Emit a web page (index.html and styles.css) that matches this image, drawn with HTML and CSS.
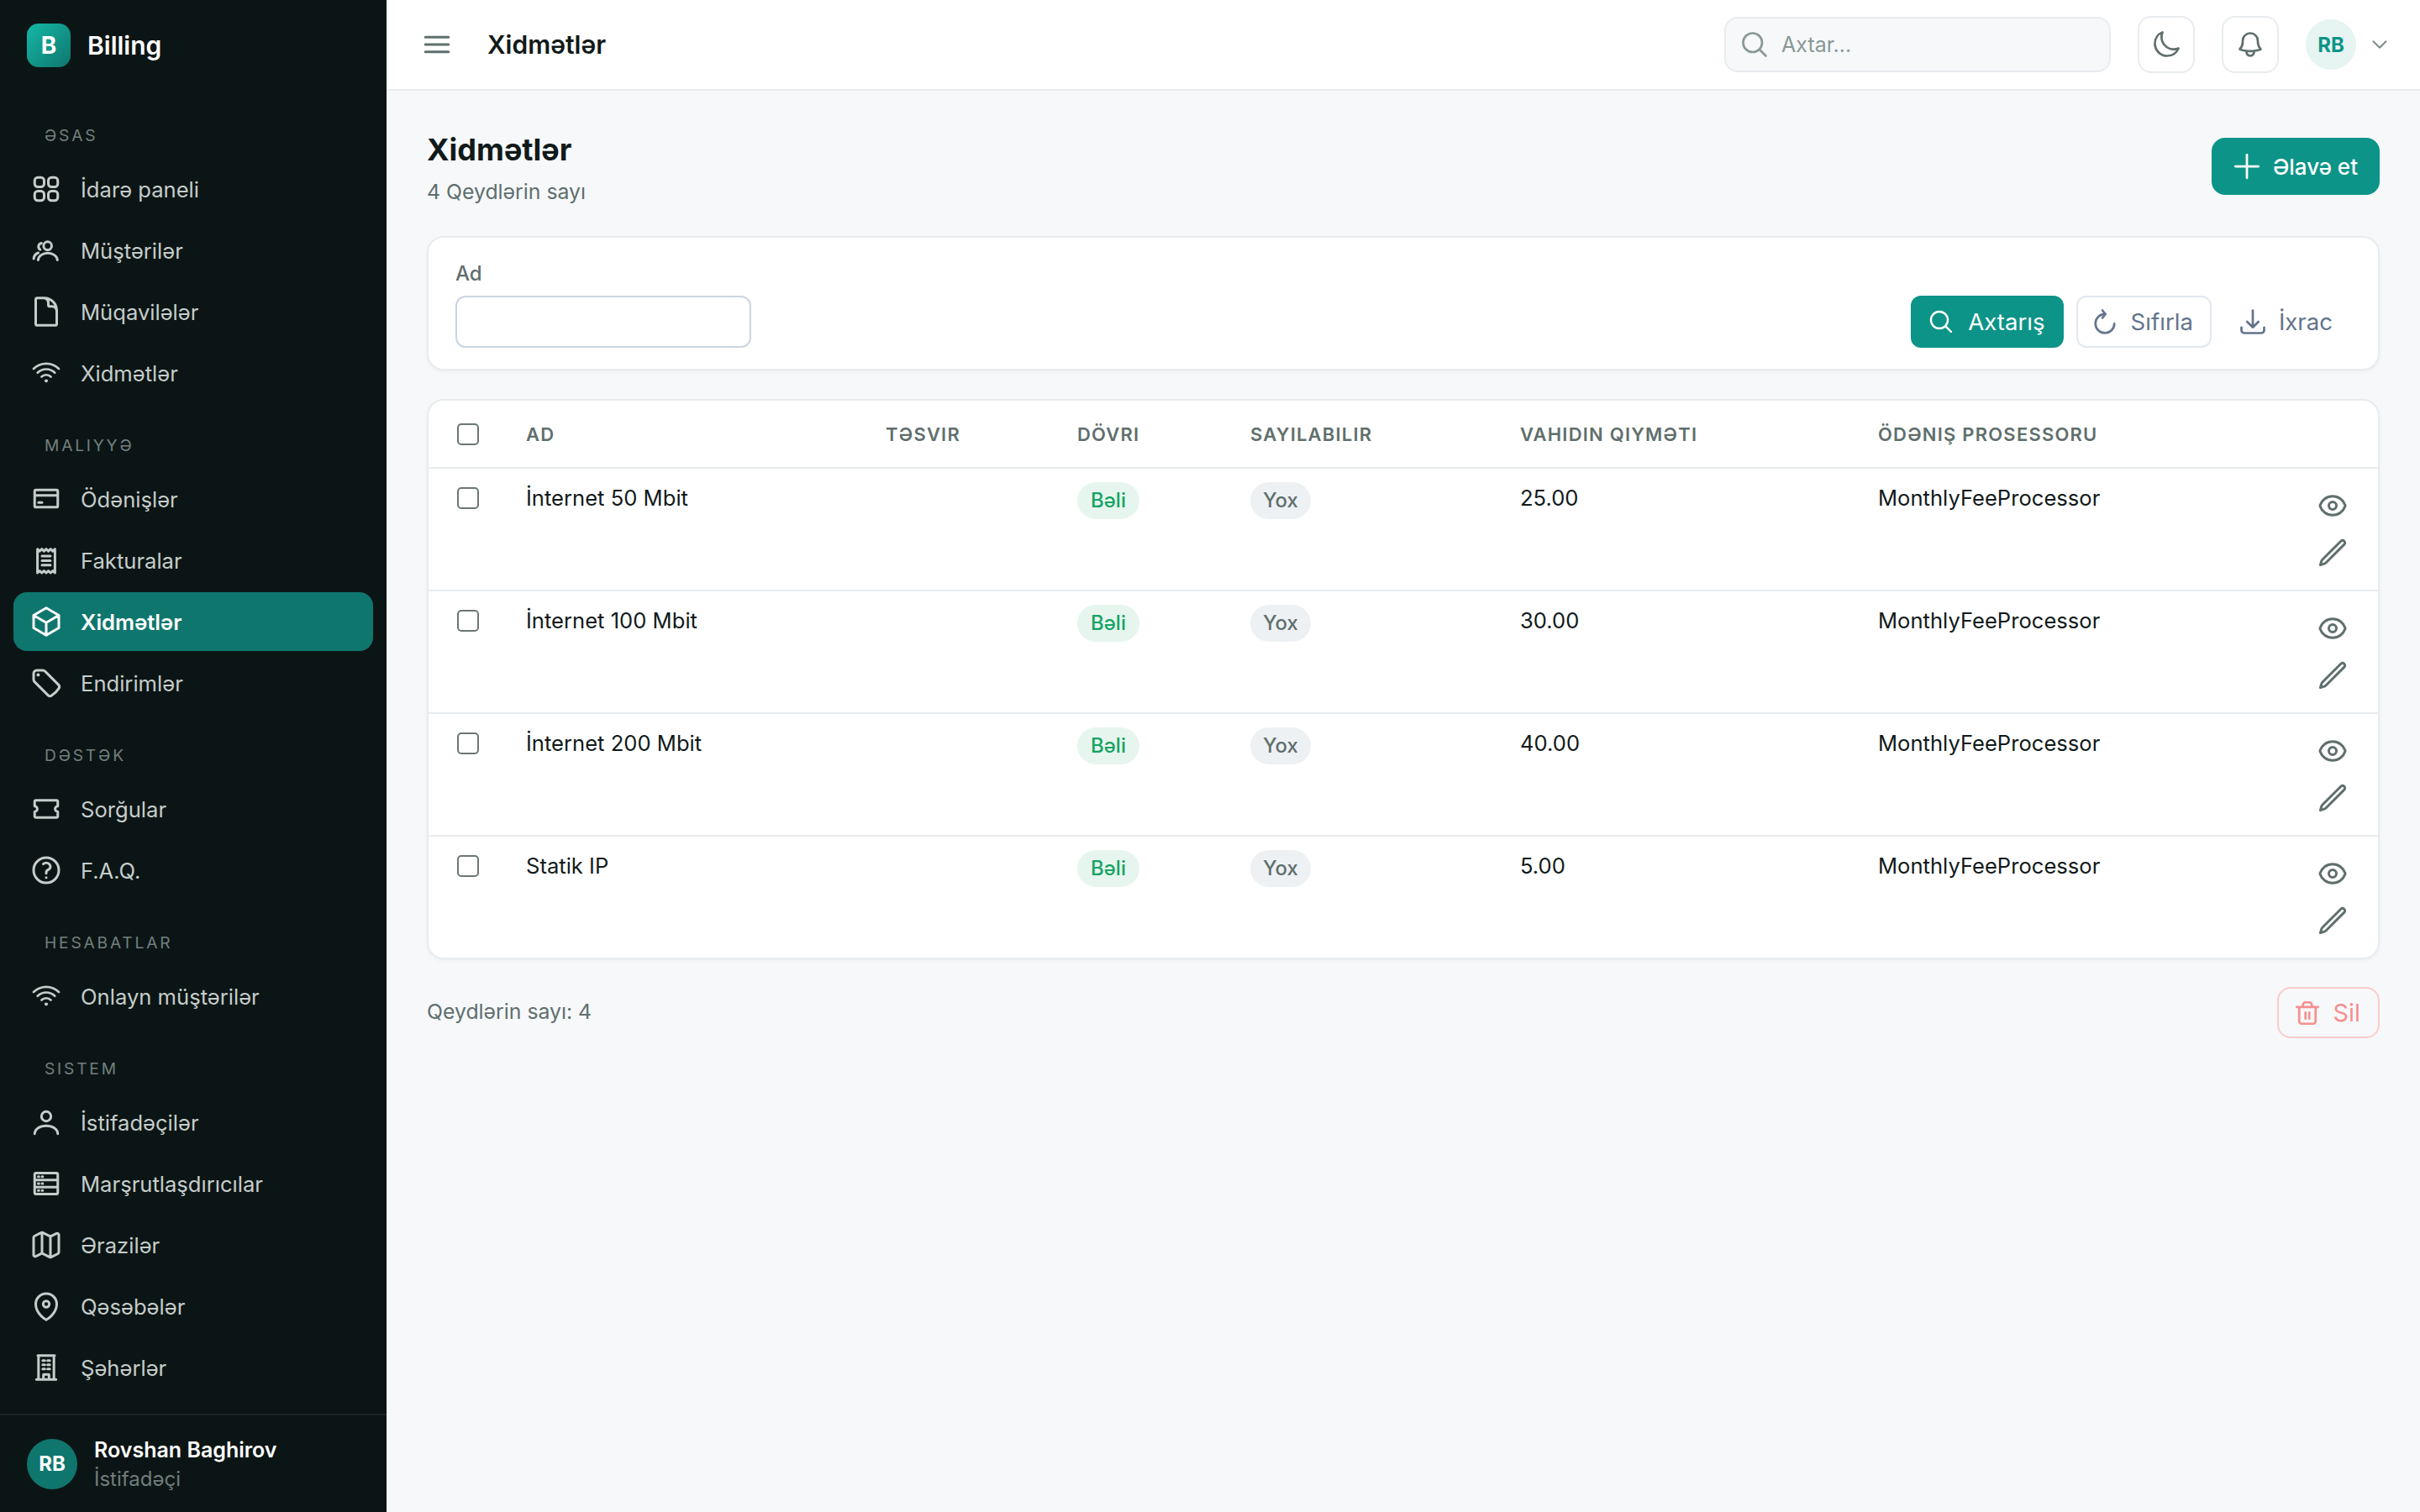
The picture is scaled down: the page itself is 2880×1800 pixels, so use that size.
FILE: index.html
```html
<!DOCTYPE html>
<html lang="az">
<head>
  <meta charset="UTF-8">
  <title>Xidmətlər - Billing</title>
  <link rel="stylesheet" href="styles.css">
</head>
<body>
  <svg class="sprite" xmlns="http://www.w3.org/2000/svg">
    <symbol id="i-grid" viewBox="0 0 24 24"><path d="M3.75 6A2.25 2.25 0 0 1 6 3.75h2.25A2.25 2.25 0 0 1 10.5 6v2.25a2.25 2.25 0 0 1-2.25 2.25H6a2.25 2.25 0 0 1-2.25-2.25V6ZM3.75 15.75A2.25 2.25 0 0 1 6 13.5h2.25a2.25 2.25 0 0 1 2.25 2.25V18a2.25 2.25 0 0 1-2.25 2.25H6A2.25 2.25 0 0 1 3.75 18v-2.25ZM13.5 6a2.25 2.25 0 0 1 2.25-2.25H18A2.25 2.25 0 0 1 20.25 6v2.25A2.25 2.25 0 0 1 18 10.5h-2.25a2.25 2.25 0 0 1-2.25-2.25V6ZM13.5 15.75a2.25 2.25 0 0 1 2.25-2.25H18a2.25 2.25 0 0 1 2.25 2.25V18A2.25 2.25 0 0 1 18 20.25h-2.25A2.25 2.25 0 0 1 13.5 18v-2.25Z"/></symbol>
    <symbol id="i-users" viewBox="0 0 24 24"><circle cx="13" cy="8.8" r="2.9"/><path d="M6.2 18.9c.3-2.9 3.2-4.9 6.9-4.9s6.6 2 6.9 4.9M8.6 6.9a2.5 2.5 0 0 0-.9 4.6M3.1 18c.1-1.900 1.200-3.500 3.200-4.200"/></symbol>
    <symbol id="i-doc" viewBox="0 0 24 24"><path d="M19.5 14.25v-2.625a3.375 3.375 0 0 0-3.375-3.375h-1.500A1.125 1.125 0 0 1 13.5 7.125v-1.500a3.375 3.375 0 0 0-3.375-3.375H8.250m2.250 0H5.625c-.621 0-1.125.504-1.125 1.125v17.250c0 .621.504 1.125 1.125 1.125h12.750c.621 0 1.125-.504 1.125-1.125V11.250a9 9 0 0 0-9-9Z"/></symbol>
    <symbol id="i-wifi" viewBox="-1.4 -1.4 26.8 26.8"><path d="M8.288 15.038a5.25 5.25 0 0 1 7.424 0M5.106 11.856c3.807-3.808 9.980-3.808 13.788 0M1.924 8.674c5.565-5.565 14.587-5.565 20.152 0M12.530 18.220l-.530.530-.530-.530a.750.750 0 0 1 1.060 0Z"/></symbol>
    <symbol id="i-card" viewBox="0 0 24 24"><path d="M3.750 9.500h16.500M6.500 14.500h2.500M4.750 5.500h14.500a1 1 0 0 1 1 1v10.400a1 1 0 0 1-1 1H4.750a1 1 0 0 1-1-1V6.500a1 1 0 0 1 1-1Z"/></symbol>
    <symbol id="i-receipt" viewBox="0 0 24 24"><path d="M5.750 4l1.560 1.500 1.560-1.500 1.560 1.500 1.560-1.500 1.560 1.500 1.560-1.500 1.560 1.500 1.560-1.500v17l-1.560-1.500-1.560 1.500-1.560-1.500-1.560 1.500-1.560-1.500-1.560 1.500-1.560-1.500-1.560 1.500ZM9 9h6M9 12.250h6M9 15.500h6"/></symbol>
    <symbol id="i-cube" viewBox="0 0 24 24"><path d="m21 7.500-9-5.250L3 7.500m18 0-9 5.250m9-5.250v9l-9 5.250M3 7.500l9 5.250M3 7.500v9l9 5.250m0-9v9"/></symbol>
    <symbol id="i-tag" viewBox="0 0 24 24"><path d="M9.568 3H5.250A2.250 2.250 0 0 0 3 5.250v4.318c0 .597.237 1.170.659 1.591l9.581 9.581c.699.699 1.780.872 2.607.330a18.095 18.095 0 0 0 5.223-5.223c.542-.827.369-1.908-.330-2.607L11.160 3.660A2.250 2.250 0 0 0 9.568 3Z"/><path d="M6 6h.500v.500H6V6Z"/></symbol>
    <symbol id="i-ticket" viewBox="0 0 24 24"><path d="M4.750 5.900h14.500a1 1 0 0 1 1 1v3.200a1.900 1.900 0 0 0 0 3.800v3.200a1 1 0 0 1-1 1H4.750a1 1 0 0 1-1-1v-3.200a1.900 1.900 0 0 0 0-3.800V6.900a1 1 0 0 1 1-1Z"/></symbol>
    <symbol id="i-help" viewBox="0 0 24 24"><path d="M9.879 7.519c1.171-1.025 3.071-1.025 4.242 0 1.172 1.025 1.172 2.687 0 3.712-.203.179-.430.326-.670.442-.745.361-1.450.999-1.450 1.827v.750M21 12a9 9 0 1 1-18 0 9 9 0 0 1 18 0Zm-9 5.250h.008v.008H12v-.008Z"/></symbol>
    <symbol id="i-user" viewBox="0 0 24 24"><circle cx="12" cy="7.800" r="3.400"/><path d="M3.750 20.200c.2-3.500 3.800-5.700 8.250-5.700s8.050 2.200 8.250 5.700"/></symbol>
    <symbol id="i-server" viewBox="0 0 24 24"><path d="M4.750 4.500h14.500a1 1 0 0 1 1 1v13a1 1 0 0 1-1 1H4.750a1 1 0 0 1-1-1v-13a1 1 0 0 1 1-1ZM3.750 9.500h16.500M3.750 14.500h16.500M6.300 7h.500M9 7h.500M6.300 12h.500M9 12h.500M6.300 17h.500M9 17h.500"/></symbol>
    <symbol id="i-map" viewBox="0 0 24 24"><path d="M9 3.400V18.200m6-12.700v15.400m.503-.152 4.875-2.437c.381-.190.622-.580.622-1.006V4.820c0-.836-.880-1.380-1.628-1.006l-3.869 1.934c-.317.159-.690.159-1.006 0L9.503 3.252a1.125 1.125 0 0 0-1.006 0L3.622 5.689C3.240 5.880 3 6.270 3 6.695V19.180c0 .836.880 1.380 1.628 1.006l3.869-1.934c.317-.159.690-.159 1.006 0l4.994 2.497c.317.158.690.158 1.006 0Z"/></symbol>
    <symbol id="i-pin" viewBox="0 0 24 24"><circle cx="12" cy="10.500" r="2.200"/><path d="M19.500 10.500c0 7.142-7.500 11.250-7.500 11.250S4.500 17.642 4.500 10.500a7.500 7.500 0 1 1 15 0Z"/></symbol>
    <symbol id="i-building" viewBox="0 0 24 24"><path d="M5 20.500h14M6 3.500h12M6.500 3.500v17m11-17v17M9.500 7h1.500M9.500 10h1.500M9.500 13h1.500M13 7h1.500M13 10h1.500M13 13h1.500M10 20.500V17h4v3.500"/></symbol>
    <symbol id="i-bars" viewBox="0 0 24 24"><path d="M3.750 6.750h16.500M3.750 12h16.500m-16.500 5.250h16.500"/></symbol>
    <symbol id="i-search" viewBox="0 0 24 24"><path d="m21 21-5.197-5.197m0 0A7.500 7.500 0 1 0 5.196 5.196a7.500 7.500 0 0 0 10.607 10.607Z"/></symbol>
    <symbol id="i-moon" viewBox="0 0 24 24"><path d="M21.752 15.002A9.720 9.720 0 0 1 18 15.750c-5.385 0-9.750-4.365-9.750-9.750 0-1.330.266-2.597.748-3.752A9.753 9.753 0 0 0 3 11.250C3 16.635 7.365 21 12.750 21a9.753 9.753 0 0 0 9.002-5.998Z"/></symbol>
    <symbol id="i-bell" viewBox="0 0 24 24"><path d="M14.857 17.082a23.848 23.848 0 0 0 5.454-1.310A8.967 8.967 0 0 1 18 9.750V9A6 6 0 0 0 6 9v.750a8.967 8.967 0 0 1-2.312 6.022c1.733.640 3.560 1.085 5.455 1.310m5.714 0a24.255 24.255 0 0 1-5.714 0m5.714 0a3 3 0 1 1-5.714 0"/></symbol>
    <symbol id="i-chevron" viewBox="0 0 24 24"><path d="m19.500 8.250-7.500 7.500-7.500-7.500"/></symbol>
    <symbol id="i-plus" viewBox="0 0 24 24"><path d="M12 4.500v15m7.500-7.500h-15"/></symbol>
    <symbol id="i-reset" viewBox="0 0 24 24"><path d="M12.500 6A7.500 7.500 0 1 0 19.500 13.500M10 3l2.500 3L10 9"/></symbol>
    <symbol id="i-download" viewBox="0 0 24 24"><path d="M3 16.500v2.250A2.250 2.250 0 0 0 5.250 21h13.500A2.250 2.250 0 0 0 21 18.750V16.500M16.500 12 12 16.500m0 0L7.500 12m4.500 4.500V3"/></symbol>
    <symbol id="i-eye" viewBox="0 0 24 24"><path d="M2.036 12.322a1.012 1.012 0 0 1 0-.639C3.423 7.510 7.360 4.500 12 4.500c4.638 0 8.573 3.007 9.963 7.178.070.207.070.431 0 .639C20.577 16.490 16.640 19.500 12 19.500c-4.638 0-8.573-3.007-9.963-7.178Z"/><path d="M15 12a3 3 0 1 1-6 0 3 3 0 0 1 6 0Z"/></symbol>
    <symbol id="i-pencil" viewBox="0 0 24 24"><path d="m16.862 4.487 1.687-1.688a1.875 1.875 0 1 1 2.652 2.652L6.832 19.820a4.500 4.500 0 0 1-1.897 1.130l-2.685.800.800-2.685a4.500 4.500 0 0 1 1.130-1.897L16.863 4.487Z"/></symbol>
    <symbol id="i-trash" viewBox="0 0 24 24"><path d="M3.500 7.200h17M8.500 7V5.500a2 2 0 0 1 2-2h3a2 2 0 0 1 2 2V7M5.500 7.500v11a2 2 0 0 0 2 2h9a2 2 0 0 0 2-2v-11M10.500 11.500v5M13.500 11.500v5"/></symbol>
  </svg>

  <div class="app">
    <!-- sidebar -->
    <aside class="sidebar">
      <div class="brand">
        <div class="brand-logo">B</div>
        <div class="brand-name">Billing</div>
      </div>
      <nav class="nav">
        <div class="nav-label">ƏSAS</div>
        <a class="nav-item"><svg class="icon"><use href="#i-grid"/></svg>İdarə paneli</a>
        <a class="nav-item"><svg class="icon"><use href="#i-users"/></svg>Müştərilər</a>
        <a class="nav-item"><svg class="icon"><use href="#i-doc"/></svg>Müqavilələr</a>
        <a class="nav-item"><svg class="icon"><use href="#i-wifi"/></svg>Xidmətlər</a>

        <div class="nav-label">MALIYYƏ</div>
        <a class="nav-item"><svg class="icon"><use href="#i-card"/></svg>Ödənişlər</a>
        <a class="nav-item"><svg class="icon"><use href="#i-receipt"/></svg>Fakturalar</a>
        <a class="nav-item active"><svg class="icon"><use href="#i-cube"/></svg>Xidmətlər</a>
        <a class="nav-item"><svg class="icon"><use href="#i-tag"/></svg>Endirimlər</a>

        <div class="nav-label">DƏSTƏK</div>
        <a class="nav-item"><svg class="icon"><use href="#i-ticket"/></svg>Sorğular</a>
        <a class="nav-item"><svg class="icon"><use href="#i-help"/></svg>F.A.Q.</a>

        <div class="nav-label">HESABATLAR</div>
        <a class="nav-item"><svg class="icon"><use href="#i-wifi"/></svg>Onlayn müştərilər</a>

        <div class="nav-label">SISTEM</div>
        <a class="nav-item"><svg class="icon"><use href="#i-user"/></svg>İstifadəçilər</a>
        <a class="nav-item"><svg class="icon"><use href="#i-server"/></svg>Marşrutlaşdırıcılar</a>
        <a class="nav-item"><svg class="icon"><use href="#i-map"/></svg>Ərazilər</a>
        <a class="nav-item"><svg class="icon"><use href="#i-pin"/></svg>Qəsəbələr</a>
        <a class="nav-item"><svg class="icon"><use href="#i-building"/></svg>Şəhərlər</a>
      </nav>
      <div class="side-user">
        <div class="side-avatar">RB</div>
        <div>
          <div class="side-name">Rovshan Baghirov</div>
          <div class="side-role">İstifadəçi</div>
        </div>
      </div>
    </aside>

    <div class="content">
      <!-- top bar -->
      <header class="topbar">
        <svg class="icon topbar-menu"><use href="#i-bars"/></svg>
        <div class="topbar-title">Xidmətlər</div>
        <div class="topbar-search">
          <svg class="icon-md"><use href="#i-search"/></svg>
          <span>Axtar...</span>
        </div>
        <button class="square-btn"><svg class="icon-md"><use href="#i-moon"/></svg></button>
        <button class="square-btn"><svg class="icon-md"><use href="#i-bell"/></svg></button>
        <div class="top-avatar">RB</div>
        <svg class="top-chevron"><use href="#i-chevron"/></svg>
      </header>

      <main class="main">
        <div class="page-head">
          <div>
            <h1>Xidmətlər</h1>
            <p>4 Qeydlərin sayı</p>
          </div>
          <button class="btn-add"><svg class="icon-plus"><use href="#i-plus"/></svg>Əlavə et</button>
        </div>

        <section class="card filter">
          <div class="filter-field">
            <label>Ad</label>
            <input type="text" class="filter-input">
          </div>
          <div class="filter-actions">
            <button class="btn btn-primary"><svg class="icon-search"><use href="#i-search"/></svg>Axtarış</button>
            <button class="btn btn-outline"><svg class="icon-md"><use href="#i-reset"/></svg>Sıfırla</button>
            <button class="btn btn-ghost"><svg class="icon-md"><use href="#i-download"/></svg>İxrac</button>
          </div>
        </section>

        <section class="card table-card">
          <table class="table">
            <thead>
              <tr>
                <th class="col-check"><input type="checkbox" class="check"></th>
                <th class="col-name">AD</th>
                <th class="col-desc">TƏSVIR</th>
                <th class="col-period">DÖVRI</th>
                <th class="col-count">SAYILABILIR</th>
                <th class="col-price">VAHIDIN QIYMƏTI</th>
                <th class="col-proc">ÖDƏNIŞ PROSESSORU</th>
                <th></th>
              </tr>
            </thead>
            <tbody>
              <tr>
                <td class="cell-check"><input type="checkbox" class="check"></td>
                <td>İnternet 50 Mbit</td>
                <td></td>
                <td><span class="badge badge-green">Bəli</span></td>
                <td><span class="badge badge-gray">Yox</span></td>
                <td>25.00</td>
                <td>MonthlyFeeProcessor</td>
                <td class="cell-actions">
                  <button class="row-btn"><svg class="icon-md"><use href="#i-eye"/></svg></button>
                  <button class="row-btn"><svg class="icon-md"><use href="#i-pencil"/></svg></button>
                </td>
              </tr>
              <tr>
                <td class="cell-check"><input type="checkbox" class="check"></td>
                <td>İnternet 100 Mbit</td>
                <td></td>
                <td><span class="badge badge-green">Bəli</span></td>
                <td><span class="badge badge-gray">Yox</span></td>
                <td>30.00</td>
                <td>MonthlyFeeProcessor</td>
                <td class="cell-actions">
                  <button class="row-btn"><svg class="icon-md"><use href="#i-eye"/></svg></button>
                  <button class="row-btn"><svg class="icon-md"><use href="#i-pencil"/></svg></button>
                </td>
              </tr>
              <tr>
                <td class="cell-check"><input type="checkbox" class="check"></td>
                <td>İnternet 200 Mbit</td>
                <td></td>
                <td><span class="badge badge-green">Bəli</span></td>
                <td><span class="badge badge-gray">Yox</span></td>
                <td>40.00</td>
                <td>MonthlyFeeProcessor</td>
                <td class="cell-actions">
                  <button class="row-btn"><svg class="icon-md"><use href="#i-eye"/></svg></button>
                  <button class="row-btn"><svg class="icon-md"><use href="#i-pencil"/></svg></button>
                </td>
              </tr>
              <tr>
                <td class="cell-check"><input type="checkbox" class="check"></td>
                <td>Statik IP</td>
                <td></td>
                <td><span class="badge badge-green">Bəli</span></td>
                <td><span class="badge badge-gray">Yox</span></td>
                <td>5.00</td>
                <td>MonthlyFeeProcessor</td>
                <td class="cell-actions">
                  <button class="row-btn"><svg class="icon-md"><use href="#i-eye"/></svg></button>
                  <button class="row-btn"><svg class="icon-md"><use href="#i-pencil"/></svg></button>
                </td>
              </tr>
            </tbody>
          </table>
        </section>

        <div class="table-foot">
          <span class="foot-count">Qeydlərin sayı: 4</span>
          <button class="btn-delete"><svg class="icon-md"><use href="#i-trash"/></svg>Sil</button>
        </div>
      </main>
    </div>
  </div>
</body>
</html>
```

FILE: styles.css
```css
* {
  box-sizing: border-box;
}
body {
  margin: 0;
  font-family: Inter, "Noto Sans", sans-serif;
  background: #f6f8fa;
  color: #111a1a;
}
button, input {
  font-family: inherit;
}
svg {
  fill: none;
  stroke: currentColor;
  stroke-width: 1.8;
  stroke-linecap: round;
  stroke-linejoin: round;
  flex: none;
}
.sprite {
  display: none;
}
.icon {
  width: 40px;
  height: 40px;
}
.icon-md {
  width: 36px;
  height: 36px;
}
.icon-search {
  width: 32px;
  height: 32px;
  margin: 0 2px;
}

.app {
  display: flex;
  min-height: 1800px;
}

/* sidebar */
.sidebar {
  width: 460px;
  height: 1800px;
  flex: none;
  display: flex;
  flex-direction: column;
  background: #0c1515;
  color: #c5cdcb;
}
.brand {
  display: flex;
  align-items: center;
  gap: 20px;
  padding: 28px 32px 0;
}
.brand-logo {
  width: 52px;
  height: 52px;
  border-radius: 14px;
  background: linear-gradient(135deg, #14b8a6, #0f766e);
  color: #fff;
  font-size: 28px;
  font-weight: 700;
  display: flex;
  align-items: center;
  justify-content: center;
}
.brand-name {
  color: #fff;
  font-size: 30px;
  font-weight: 600;
}
.nav {
  flex: 1;
  padding: 30px 16px 0;
}
.nav-label {
  height: 30px;
  line-height: 30px;
  margin: 36px 0 14px;
  padding-left: 37px;
  font-size: 19.2px;
  letter-spacing: 2.8px;
  color: #71807e;
}
.nav-item {
  display: flex;
  align-items: center;
  gap: 21px;
  height: 70px;
  margin-bottom: 3px;
  padding-left: 19px;
  border-radius: 16px;
  font-size: 25.6px;
}
.nav-item:has(+ .nav-label) {
  margin-bottom: 0;
}
.nav-item.active {
  background: #0f766e;
  color: #fff;
  font-weight: 600;
}
.side-user {
  height: 117px;
  display: flex;
  align-items: center;
  gap: 20px;
  padding: 0 32px;
  border-top: 2px solid #1a2424;
}
.side-avatar {
  width: 60px;
  height: 60px;
  border-radius: 50%;
  background: #0f766e;
  color: #fff;
  font-size: 24px;
  font-weight: 700;
  display: flex;
  align-items: center;
  justify-content: center;
}
.side-name {
  color: #fff;
  font-size: 25px;
  font-weight: 600;
  line-height: 34px;
  margin-bottom: 2px;
}
.side-role {
  color: #6f7e7c;
  font-size: 24px;
  line-height: 32px;
}

/* top bar */
.content {
  flex: 1;
  min-width: 0;
}
.topbar {
  height: 108px;
  display: flex;
  align-items: center;
  padding: 0 36px 0 40px;
  background: #fff;
  border-bottom: 2px solid #e8ecef;
}
.topbar-menu {
  color: #5f6f6d;
}
.topbar-title {
  margin-left: 40px;
  flex: 1;
  font-size: 30px;
  font-weight: 600;
}
.topbar-search {
  width: 460px;
  height: 66px;
  display: flex;
  align-items: center;
  gap: 14px;
  padding-left: 16px;
  margin-right: 32px;
  background: #f6f8f9;
  border: 2px solid #e8ecef;
  border-radius: 16px;
  color: #8a9896;
  font-size: 25px;
}
.square-btn {
  width: 68px;
  height: 68px;
  margin-right: 32px;
  padding: 0;
  display: flex;
  align-items: center;
  justify-content: center;
  background: #fff;
  border: 2px solid #e8ecef;
  border-radius: 16px;
  color: #5f6f6d;
}
.top-avatar {
  width: 60px;
  height: 60px;
  border-radius: 50%;
  background: #e6f4f2;
  color: #0d9488;
  font-size: 24px;
  font-weight: 700;
  display: flex;
  align-items: center;
  justify-content: center;
}
.top-chevron {
  width: 24px;
  height: 24px;
  margin-left: 16px;
  color: #7d8b89;
  stroke-width: 2;
}

/* page */
.main {
  padding: 48px 48px 0;
}
.page-head {
  display: flex;
  justify-content: space-between;
  align-items: flex-start;
  margin-bottom: 35px;
}
.page-head h1 {
  margin: 0;
  font-size: 36px;
  line-height: 44px;
  font-weight: 700;
}
.page-head p {
  margin: 10px 0 0;
  font-size: 24.8px;
  line-height: 36px;
  color: #5f6f6d;
}
.btn-add {
  height: 68px;
  margin-top: 8px;
  padding: 0 26px 0 20px;
  display: flex;
  align-items: center;
  gap: 9px;
  background: #0d9488;
  border: none;
  border-radius: 16px;
  color: #fff;
  font-size: 26px;
  font-weight: 500;
}
.icon-plus {
  width: 44px;
  height: 44px;
  stroke-width: 1.5;
}
.card {
  background: #fff;
  border: 2px solid #e8ecef;
  border-radius: 20px;
  box-shadow: 0 2px 4px rgba(0, 0, 0, 0.04);
}

/* filter */
.filter {
  display: flex;
  justify-content: space-between;
  align-items: flex-end;
  padding: 24px 32px 25px;
  margin-bottom: 34px;
}
.filter-field label {
  display: block;
  height: 38px;
  line-height: 38px;
  margin-bottom: 7px;
  font-size: 24px;
  font-weight: 500;
  color: #5f6f6d;
}
.filter-input {
  display: block;
  width: 352px;
  height: 62px;
  background: #fff;
  border: 2px solid #cbd5e1;
  border-radius: 12px;
}
.filter-actions {
  display: flex;
  gap: 15px;
}
.btn {
  height: 62px;
  display: flex;
  align-items: center;
  gap: 13px;
  padding: 0 20px 0 14px;
  border-radius: 12px;
  font-size: 27.6px;
  border: 2px solid transparent;
}
.btn-primary {
  padding-left: 16px;
  gap: 14px;
  background: #0d9488;
  color: #fff;
}
.btn-outline {
  background: #fff;
  border-color: #e2e8f0;
  color: #64748b;
}
.btn-ghost {
  background: transparent;
  color: #64748b;
}

/* table */
.table-card {
  overflow: hidden;
  margin-bottom: 33px;
}
.table {
  width: 100%;
  table-layout: fixed;
  border-collapse: separate;
  border-spacing: 0;
}
.table th {
  height: 81px;
  padding: 0 0 0 24px;
  border-bottom: 2px solid #e8ecef;
  text-align: left;
  font-size: 22px;
  font-weight: 600;
  letter-spacing: 1.2px;
  color: #5f6f6d;
}
.table td {
  padding: 16px 0 0 24px;
  height: 146px;
  vertical-align: top;
  border-bottom: 2px solid #e8ecef;
  font-size: 25.6px;
  line-height: 38px;
}
.table tr:last-child td {
  border-bottom: none;
  height: 144px;
}
.col-check {
  width: 92px;
}
.col-name {
  width: 428px;
}
.col-desc {
  width: 228px;
}
.col-period {
  width: 206px;
}
.col-count {
  width: 321px;
}
.col-price {
  width: 426px;
}
.col-proc {
  width: 490px;
}
.table th.col-check, .table td.cell-check {
  padding-left: 34px;
}
.table td.cell-check {
  padding-top: 22px;
}
.check {
  appearance: none;
  display: block;
  width: 26px;
  height: 26px;
  margin: 0;
  background: #fff;
  border: 2px solid #6b7775;
  border-radius: 5px;
}
.badge {
  display: inline-block;
  height: 44px;
  line-height: 44px;
  padding: 0 16px;
  border-radius: 22px;
  font-size: 24px;
  font-weight: 500;
}
.badge-green {
  background: #e6f6ee;
  color: #16a364;
}
.badge-gray {
  padding: 0 15px;
  background: #eef1f3;
  color: #5f6f6d;
}
.table td.cell-actions {
  padding: 16px 26px 0 0;
}
.row-btn {
  display: block;
  width: 56px;
  height: 56px;
  margin-left: auto;
  padding: 10px;
  background: none;
  border: none;
  color: #5f6f6d;
}
.row-btn svg {
  stroke-width: 2;
}

/* under the table */
.table-foot {
  display: flex;
  justify-content: space-between;
  align-items: center;
  font-size: 24.8px;
  color: #5f6f6d;
}
.foot-count {
  margin-bottom: 3px;
}
.btn-delete {
  height: 61px;
  display: flex;
  align-items: center;
  gap: 13px;
  padding: 0 21px 0 16px;
  background: none;
  border: 2px solid #fecaca;
  border-radius: 16px;
  color: #f78f8f;
  font-size: 28.8px;
}
```
